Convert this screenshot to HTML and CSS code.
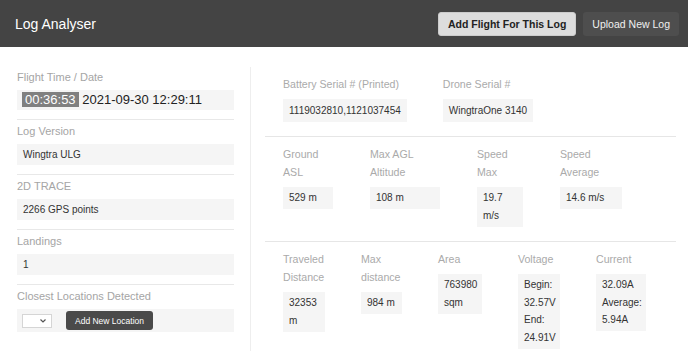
FILE: index.html
```html
<!DOCTYPE html>
<html lang="en">
<head>
    <meta charset="UTF-8">
    <meta name="viewport" content="width=device-width, initial-scale=1.0">
    <title>Log Analyser</title>
    <link rel="stylesheet" href="styles.css">
</head>
<body>

<header class="topbar">
    <div class="brand">Log Analyser</div>
    <div class="actions">
        <button class="btn btn-light">Add Flight For This Log</button>
        <button class="btn btn-dark">Upload New Log</button>
    </div>
</header>

<main class="layout">
    <section class="summary">
        <div class="field">
            <div class="field-label">Flight Time / Date</div>
            <div class="field-value field-date"><span class="duration">00:36:53</span> 2021-09-30 12:29:11</div>
        </div>
        <div class="field">
            <div class="field-label">Log Version</div>
            <div class="field-value">Wingtra ULG</div>
        </div>
        <div class="field">
            <div class="field-label">2D TRACE</div>
            <div class="field-value">2266 GPS points</div>
        </div>
        <div class="field">
            <div class="field-label">Landings</div>
            <div class="field-value">1</div>
        </div>
        <div class="field">
            <div class="field-label">Closest Locations Detected</div>
            <div class="field-value location-row">
                <span class="select-wrap">
                    <select class="location-select"></select>
                    <svg class="select-arrow" width="6" height="4" viewBox="0 0 6 4"><path d="M0.5 0.5 L3 3 L5.5 0.5" fill="none" stroke="#555" stroke-width="1.2"/></svg>
                </span>
                <button class="add-location">Add New Location</button>
            </div>
        </div>
    </section>

    <section class="details">
        <div class="stat-row stat-row-top">
            <div class="stat">
                <div class="stat-label">Battery Serial # (Printed)</div>
                <div class="stat-value">1119032810,1121037454</div>
            </div>
            <div class="stat">
                <div class="stat-label">Drone Serial #</div>
                <div class="stat-value">WingtraOne 3140</div>
            </div>
        </div>

        <div class="stat-row stat-grid-flight">
            <div class="stat">
                <div class="stat-label">Ground ASL</div>
                <div class="stat-value">529 m</div>
            </div>
            <div class="stat">
                <div class="stat-label">Max AGL Altitude</div>
                <div class="stat-value">108 m</div>
            </div>
            <div class="stat">
                <div class="stat-label">Speed Max</div>
                <div class="stat-value">19.7 m/s</div>
            </div>
            <div class="stat">
                <div class="stat-label">Speed Average</div>
                <div class="stat-value">14.6 m/s</div>
            </div>
        </div>

        <div class="stat-row stat-grid-power">
            <div class="stat">
                <div class="stat-label">Traveled Distance</div>
                <div class="stat-value">32353 m</div>
            </div>
            <div class="stat">
                <div class="stat-label">Max distance</div>
                <div class="stat-value">984 m</div>
            </div>
            <div class="stat">
                <div class="stat-label">Area</div>
                <div class="stat-value">763980 sqm</div>
            </div>
            <div class="stat">
                <div class="stat-label">Voltage</div>
                <div class="stat-value">Begin: 32.57V End: 24.91V</div>
            </div>
            <div class="stat">
                <div class="stat-label">Current</div>
                <div class="stat-value">32.09A Average: 5.94A</div>
            </div>
        </div>
    </section>
</main>

</body>
</html>
```

FILE: styles.css
```css
body {
    font-family: 'Liberation Sans', Arial, sans-serif;
    margin: 0;
    background-color: #ffffff;
    color: #333;
}
.topbar {
    display: flex;
    justify-content: space-between;
    align-items: center;
    height: 47px;
    box-sizing: border-box;
    padding: 0 9px 0 15px;
    background-color: #444;
}
.brand {
    color: #fff;
    font-size: 14px;
}
.actions {
    display: flex;
    gap: 7px;
}
.btn {
    height: 24px;
    padding: 0 9px;
    font-family: inherit;
    font-size: 10.5px;
    border-radius: 3px;
    cursor: pointer;
}
.btn-light {
    background-color: #ddd;
    color: #222;
    font-weight: bold;
    border: 1px solid #ccc;
}
.btn-dark {
    background-color: #4e4e4e;
    color: #f0f0f0;
    border: none;
}
.layout {
    display: flex;
    padding-top: 20px;
}
.summary {
    width: 250px;
    flex-shrink: 0;
    box-sizing: border-box;
    padding: 2px 16px 0 17px;
}
.field {
    padding-bottom: 9px;
    border-bottom: 1px solid #e8e8e8;
}
.field + .field {
    margin-top: 3px;
}
.field:last-child {
    border-bottom: none;
}
.field-label {
    font-size: 11px;
    line-height: 16px;
    color: #a5a5a5;
    margin-bottom: 5px;
}
.field-value {
    background-color: #f5f5f5;
    font-size: 10px;
    line-height: 17px;
    padding: 2px 6px;
    color: #333;
}
.field-date {
    font-size: 13px;
    line-height: 16px;
    padding: 2px 5px;
    color: #222;
}
.duration {
    background-color: #808080;
    color: #fff;
    padding: 0 3px;
}
.location-row {
    display: flex;
    align-items: center;
    gap: 14px;
    padding: 2px 5px;
}
.select-wrap {
    position: relative;
    display: inline-block;
    height: 14px;
}
.location-select {
    appearance: none;
    -webkit-appearance: none;
    display: block;
    width: 30px;
    height: 14px;
    margin: 0;
    border: 1px solid #d5d5d5;
    background-color: #fff;
}
.select-arrow {
    position: absolute;
    right: 6px;
    top: 5px;
}
.add-location {
    height: 19px;
    padding: 0 9px;
    background-color: #4a4a4a;
    color: #fff;
    border: none;
    border-radius: 3px;
    font-family: inherit;
    font-size: 8.5px;
}
.details {
    flex: 1;
    border-left: 1px solid #eee;
    padding: 0 12px 0 14px;
}
.stat-row {
    padding: 8px 0 14px 18px;
}
.stat-row + .stat-row {
    border-top: 1px solid #e6e6e6;
}
.stat-row-top {
    display: flex;
    gap: 36px;
}
.stat-grid-flight {
    display: grid;
    grid-template-columns: 50px 70px 46px 62px;
    column-gap: 37px;
    align-items: start;
}
.stat-grid-power {
    display: grid;
    grid-template-columns: 42px 41px 44px 42px 50px;
    column-gap: 36px;
    align-items: start;
}
.stat {
    display: flex;
    flex-direction: column;
}
.stat-label {
    font-size: 10.6px;
    line-height: 18px;
    color: #aaa;
    margin-bottom: 6px;
}
.stat-value {
    background-color: #f5f5f5;
    color: #333;
    font-size: 10px;
    line-height: 17.5px;
    padding: 2.5px 6px;
}
```
